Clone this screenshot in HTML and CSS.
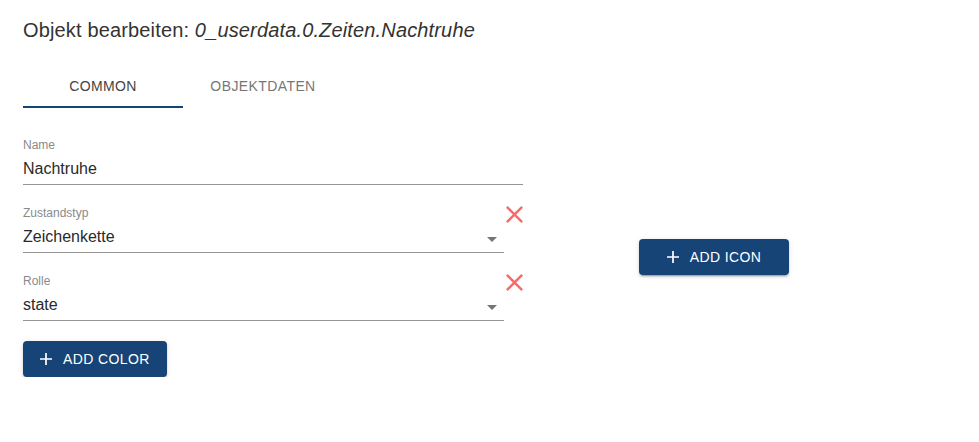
FILE: index.html
```html
<!DOCTYPE html>
<html lang="de">
<head>
<meta charset="utf-8">
<title>Objekt bearbeiten</title>
<link rel="stylesheet" href="styles.css">
</head>
<body>
<div class="dialog">
  <h2 class="title">Objekt bearbeiten: <i>0_userdata.0.Zeiten.Nachtruhe</i></h2>
  <div class="tabs">
    <div class="tab active">Common</div>
    <div class="tab">Objektdaten</div>
  </div>
  <div class="content">
    <div class="left">
      <div class="field wide">
        <label class="label">Name</label>
        <div class="input">Nachtruhe</div>
      </div>
      <div class="row">
        <div class="field select">
          <label class="label">Zustandstyp</label>
          <div class="input">Zeichenkette</div>
          <svg class="arrow" viewBox="0 0 24 24" width="24" height="24"><path d="M7 10l5 5 5-5z"/></svg>
        </div>
        <svg class="close" viewBox="5 5 14 14" width="17" height="17"><path d="M19 6.41L17.59 5 12 10.59 6.41 5 5 6.41 10.59 12 5 17.59 6.41 19 12 13.41 17.59 19 19 17.59 13.41 12z"/></svg>
      </div>
      <div class="row">
        <div class="field select">
          <label class="label">Rolle</label>
          <div class="input">state</div>
          <svg class="arrow" viewBox="0 0 24 24" width="24" height="24"><path d="M7 10l5 5 5-5z"/></svg>
        </div>
        <svg class="close" viewBox="5 5 14 14" width="17" height="17"><path d="M19 6.41L17.59 5 12 10.59 6.41 5 5 6.41 10.59 12 5 17.59 6.41 19 12 13.41 17.59 19 19 17.59 13.41 12z"/></svg>
      </div>
      <button class="btn">
        <svg class="plus" viewBox="5 5 14 14" width="12" height="12"><path d="M19 13h-6v6h-2v-6H5v-2h6V5h2v6h6v2z"/></svg>
        <span>Add color</span>
      </button>
    </div>
    <div class="right">
      <button class="btn fixed">
        <svg class="plus" viewBox="5 5 14 14" width="12" height="12"><path d="M19 13h-6v6h-2v-6H5v-2h6V5h2v6h6v2z"/></svg>
        <span>Add icon</span>
      </button>
    </div>
  </div>
</div>
</body>
</html>
```

FILE: styles.css
```css
* { box-sizing: border-box; }
html, body { margin: 0; padding: 0; background: #fff; }
body { font-family: "Liberation Sans", Arial, sans-serif; color: rgba(0,0,0,0.87); }

.dialog { padding: 0 0 0 23px; }

.title {
  margin: 0;
  padding-top: 14px;
  height: 48px;
  line-height: 32px;
  font-size: 20px;
  font-weight: 400;
  letter-spacing: 0.15px;
  color: #333;
}
.title i { font-style: italic; }

.tabs {
  display: flex;
  margin-top: 12px;
  height: 48px;
}
.tab {
  width: 160px;
  height: 48px;
  display: flex;
  align-items: center;
  justify-content: center;
  font-size: 14px;
  letter-spacing: 0.4px;
  text-transform: uppercase;
  color: #777;
  border-bottom: 2px solid transparent;
  padding-top: 5px;
}
.tab.active { color: #444; border-bottom-color: #164477; }

.content {
  display: flex;
  align-items: center;
  margin-top: 29px;
}
.left { width: 500px; display: flex; flex-direction: column; align-items: flex-start; }
.right { margin-left: 116px; }

.field {
  position: relative;
  height: 48px;
  padding-top: 16px;
  border-bottom: 1px solid #949494;
  margin-bottom: 20px;
}
.field.wide { width: 500px; }
.field.select { width: 481px; }
.label {
  position: absolute;
  left: 0;
  top: 2px;
  font-size: 12px;
  line-height: 12px;
  color: #8a8a8a;
}
.input {
  padding: 6px 0 7px;
  font-size: 16px;
  line-height: 19px;
  height: 32px;
  color: #2a2a2a;
}
.arrow {
  position: absolute;
  right: 0;
  top: 22px;
  fill: #757575;
}
.row { display: flex; align-items: flex-start; width: 500px; }
.close {
  fill: #ff6666;
  margin-left: 2px;
  margin-top: 1px;
}

.btn {
  display: inline-flex;
  align-items: center;
  justify-content: center;
  height: 36px;
  padding: 0 17px 0 17px;
  border: none;
  border-radius: 4px;
  background: #164477;
  color: #fff;
  font-family: "Liberation Sans", Arial, sans-serif;
  font-size: 14px;
  font-weight: 400;
  letter-spacing: 0.4px;
  text-transform: uppercase;
  box-shadow: 0 3px 1px -2px rgba(0,0,0,0.2), 0 2px 2px 0 rgba(0,0,0,0.14), 0 1px 5px 0 rgba(0,0,0,0.12);
}
.btn.fixed { width: 150px; padding: 0; }
.plus { fill: #fff; margin-right: 11px; }
```
